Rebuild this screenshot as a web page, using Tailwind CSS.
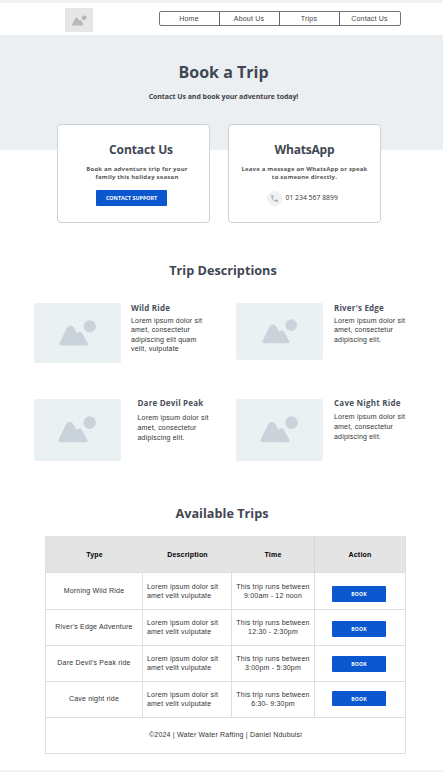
<!DOCTYPE html>
<html lang="en"><head><meta charset="utf-8"><title>Book a Trip</title>
<script src="https://cdn.jsdelivr.net/npm/@tailwindcss/browser@4"></script></head>
<body class="w-[443px] h-[772px] overflow-hidden bg-white font-['Liberation_Sans',sans-serif] text-[7px] text-[#333] tracking-[0.2px]">
<svg class="hidden"><defs>
<symbol id="pic" viewBox="0 0 38 26"><path d="M2.500 25.500Q-.3 25.500.7 22.800L7.500 8.500Q9 5.500 11.500 5.500Q14 5.500 15.500 8.500L18.200 13.500Q20.500 10.200 23 13L28.600 23Q29.500 25.500 27 25.500Z"/><circle cx="30.800" cy="6.300" r="6.100"/></symbol>
</defs></svg>
<div class="w-full h-[772px] flex flex-col border-t-[3px] border-b-2 border-[#f1f3f4]">
<header class="h-8 flex-none flex pl-[65px] border-l-2 border-[#f5f7f8] -ml-[2px]">
<div class="mt-[5px] w-[28px] h-6 bg-[#e6e6e6] flex-none"><svg class="w-[15px] h-[11px] mt-[7px] ml-[6.500px] fill-[#b8b8b8]"><use href="#pic"/></svg></div>
<nav class="ml-[65.500px] mt-2 w-[242px] h-[15px] grid grid-cols-4 border border-[#777] rounded-[2px] divide-x divide-[#666] text-center leading-[14px] text-[#444]">
<a>Home</a><a>About Us</a><a>Trips</a><a>Contact Us</a></nav>
</header>
<section class="h-[115px] flex-none bg-[#ebeff2] text-center font-['Open_Sans',sans-serif] font-bold text-[#3f4753] pl-[4px]">
<h1 class="pt-[25px] text-[16px] leading-6 tracking-[0px]">Book a Trip</h1>
<p class="mt-2 text-[7px] leading-[10px] tracking-[-0.06px] text-[#444]">Contact Us and book your adventure today!</p>
</section>
<section class="-mt-[26px] h-[99px] flex-none flex gap-[18px] pl-[57px] text-center font-['Open_Sans',sans-serif] relative">
<div class="w-[153px] border border-[#ccd3d8] rounded-[4px] bg-white">
<h2 class="mt-4 ml-[15px] text-[12px] leading-[18px] font-bold text-[#3f4753] tracking-[-0.1px]">Contact Us</h2>
<p class="mt-[6px] ml-[7px] text-[6px] leading-[8px] font-bold text-[#555] tracking-[0.2px] whitespace-nowrap">Book an adventure trip for your<br>family this holiday season</p>
<button class="block mt-[9px] ml-[38px] w-[71px] h-4 bg-[#0b57d0] text-white text-[5.350px] leading-4 font-bold tracking-[0px] rounded-[1px]">CONTACT SUPPORT</button>
</div>
<div class="w-[153px] border border-[#ccd3d8] rounded-[4px] bg-white">
<h2 class="mt-4 text-[12px] leading-[18px] font-bold text-[#3f4753] tracking-[-0.2px]">WhatsApp</h2>
<p class="mt-[6px] text-[6px] leading-[8px] font-bold text-[#555] tracking-[0.2px] whitespace-nowrap">Leave a message on WhatsApp or speak<br>to someone directly.</p>
<div class="flex items-center mt-[9px] ml-[38px] h-4 gap-[3.500px]"><span class="w-[15px] h-[15px] rounded-full bg-[#eef1f3] flex items-center justify-center"><svg class="w-[9px] h-[9px]" viewBox="0 0 24 24" fill="#a5adb4"><path d="M6.620 10.790c1.440 2.830 3.760 5.140 6.590 6.590l2.200-2.200c.27-.27.67-.36 1.020-.24 1.120.37 2.330.57 3.570.57.550 0 1 .45 1 1V20c0 .550-.45 1-1 1C10.610 21 3 13.390 3 4c0-.55.450-1 1-1h3.500c.550 0 1 .450 1 1 0 1.250.2 2.450.57 3.570.110.350.030.740-.25 1.020z"/></svg></span><span class="text-[6.850px] tracking-[0px] whitespace-nowrap">01 234 567 8899</span></div>
</div>
</section>
<h2 class="mt-[37px] ml-[3px] h-5 flex-none text-center font-['Open_Sans',sans-serif] font-bold text-[12.700px] leading-5 text-[#3f4753] tracking-[0px]">Trip Descriptions</h2>
<section class="mt-[23px] ml-[34px] flex-none grid grid-cols-[202px_1fr] grid-rows-[95px_95px] whitespace-nowrap leading-[9.400px]">
<article class="flex"><div class="w-[87px] h-[60px] bg-[#ebf0f3] rounded-[2px]"><svg class="w-[38px] h-[26px] mt-[17px] ml-[24.500px] fill-[#cbd3da]"><use href="#pic"/></svg></div>
<div class="ml-[10px]"><h3 class="font-['Open_Sans',sans-serif] font-bold text-[8px] leading-[10px] text-[#4a515b] tracking-[0.2px]">Wild Ride</h3><p class="mt-[3px]">Lorem ipsum dolor sit<br>amet, consectetur<br>adipiscing elit quam<br>velit, vulputate</p></div></article>
<article class="flex"><div class="w-[87px] h-[57px] bg-[#ebf0f3] rounded-[2px]"><svg class="w-[36px] h-[25px] mt-[16px] ml-[25.500px] fill-[#cbd3da]"><use href="#pic"/></svg></div>
<div class="ml-[11px]"><h3 class="font-['Open_Sans',sans-serif] font-bold text-[8px] leading-[10px] text-[#4a515b] tracking-[0.2px]">River's Edge</h3><p class="mt-[3px]">Lorem ipsum dolor sit<br>amet, consectetur<br>adipiscing elit.</p></div></article>
<article class="flex"><div class="mt-px w-[87px] h-[62px] bg-[#ebf0f3] rounded-[2px]"><svg class="w-[39px] h-[27px] mt-[17px] ml-[23.500px] fill-[#cbd3da]"><use href="#pic"/></svg></div>
<div class="ml-[16.500px]"><h3 class="font-['Open_Sans',sans-serif] font-bold text-[8px] leading-[10px] text-[#4a515b] tracking-[0.2px]">Dare Devil Peak</h3><p class="mt-[5px] leading-[10px]">Lorem ipsum dolor sit<br>amet, consectetur<br>adipiscing elit.</p></div></article>
<article class="flex"><div class="mt-px w-[87px] h-[62px] bg-[#ebf0f3] rounded-[2px]"><svg class="w-[39px] h-[27px] mt-[17px] ml-[23.500px] fill-[#cbd3da]"><use href="#pic"/></svg></div>
<div class="ml-[11px]"><h3 class="font-['Open_Sans',sans-serif] font-bold text-[8px] leading-[10px] text-[#4a515b] tracking-[0.250px]">Cave Night Ride</h3><p class="mt-[4px] leading-[10px]">Lorem ipsum dolor sit<br>amet, consectetur<br>adipiscing elit.</p></div></article>
</section>
<h2 class="mt-[10px] ml-[1px] h-5 flex-none text-center font-['Open_Sans',sans-serif] font-bold text-[12.700px] leading-5 text-[#3f4753] tracking-[0px]">Available Trips</h2>
<section class="mt-[13px] ml-[45px] w-[361px] flex-none border-x border-[#dedede] whitespace-nowrap text-center leading-[9px]">
<div class="h-[36px] grid grid-cols-[97px_89px_82px_91px] items-center bg-[#e4e4e4] font-bold text-black tracking-[0.2px]"><span>Type</span><span>Description</span><span>Time</span><span class="h-full border-l border-[#d6d6d6] leading-[37px]">Action</span></div>
<div class="h-[37px] grid grid-cols-[97px_89px_83px_90px] border-t border-[#dedede] divide-x divide-[#dedede]"><span class="leading-[36px]">Morning Wild Ride</span><span class="pt-[9px] pl-1 text-left">Lorem ipsum dolor sit<br>amet velit vulputate</span><span class="pt-[9px]">This trip runs between<br>9:00am - 12 noon</span><span><button class="block mt-[13px] ml-[17px] w-[54px] h-[15.500px] rounded-[1px] bg-[#0b57d0] text-white font-['Open_Sans',sans-serif] font-bold text-[5px] leading-[16px]">BOOK</button></span></div>
<div class="h-[36px] grid grid-cols-[97px_89px_83px_90px] border-t border-[#dedede] divide-x divide-[#dedede]"><span class="leading-[34px]">River's Edge Adventure</span><span class="pt-[8px] pl-1 text-left">Lorem ipsum dolor sit<br>amet velit vulputate</span><span class="pt-[8px]">This trip runs between<br>12:30 - 2:30pm</span><span><button class="block mt-[11px] ml-[17px] w-[54px] h-[15.500px] rounded-[1px] bg-[#0b57d0] text-white font-['Open_Sans',sans-serif] font-bold text-[5px] leading-[16px]">BOOK</button></span></div>
<div class="h-[36px] grid grid-cols-[97px_89px_83px_90px] border-t border-[#dedede] divide-x divide-[#dedede]"><span class="leading-[34px]">Dare Devil's Peak ride</span><span class="pt-[8px] pl-1 text-left">Lorem ipsum dolor sit<br>amet velit vulputate</span><span class="pt-[8px]">This trip runs between<br>3:00pm - 5:30pm</span><span><button class="block mt-[10px] ml-[17px] w-[54px] h-[15.500px] rounded-[1px] bg-[#0b57d0] text-white font-['Open_Sans',sans-serif] font-bold text-[5px] leading-[16px]">BOOK</button></span></div>
<div class="h-[36px] grid grid-cols-[97px_89px_83px_90px] border-t border-[#dedede] divide-x divide-[#dedede]"><span class="leading-[34px]">Cave night ride</span><span class="pt-[8px] pl-1 text-left">Lorem ipsum dolor sit<br>amet velit vulputate</span><span class="pt-[8px]">This trip runs between<br>6:30- 9:30pm</span><span><button class="block mt-[8.500px] ml-[17px] w-[54px] h-[15.500px] rounded-[1px] bg-[#0b57d0] text-white font-['Open_Sans',sans-serif] font-bold text-[5px] leading-[16px]">BOOK</button></span></div>
<footer class="h-[37px] border-y border-[#dedede] leading-[34px]">©2024 | Water Water Rafting | Daniel Ndubuisi</footer>
</section>
</div>
</body></html>
